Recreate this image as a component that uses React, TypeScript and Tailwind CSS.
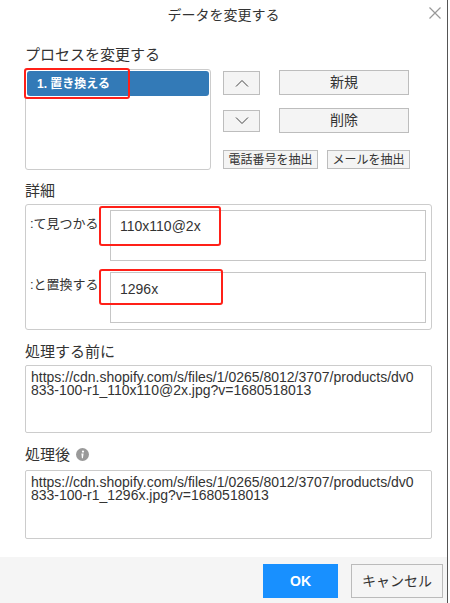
const font = "font-['Liberation_Sans','Noto_Sans_CJK_JP',sans-serif]";

const GrayButton = ({ label, className }: { label: string; className: string }) => {
  return (
    <button
      className={`flex items-center justify-center border border-[#bdbdbd] bg-[#f4f4f4] text-[#333] ${className}`}
    >
      {label}
    </button>
  );
};

const Chevron = ({ up }: { up?: boolean }) => {
  return (
    <svg width="14" height="8" viewBox="0 0 14 8" className="text-[#444]">
      <path
        d={up ? "M1 7.5 L7 1.5 L13 7.5" : "M1 0.5 L7 6.5 L13 0.5"}
        fill="none"
        stroke="currentColor"
        strokeWidth="1"
      />
    </svg>
  );
};

const RedMark = ({ className }: { className: string }) => {
  return <div className={`absolute rounded-[3px] border-2 border-[#ff2018] ${className}`} />;
};

const App = () => {
  return (
    <div className={`flex h-[603px] w-[450px] bg-white ${font}`}>
      <div className="flex w-[448px] flex-col border-r border-[#555]">
        {/* title bar */}
        <div className="relative flex h-[28px] items-center justify-center pt-[2px] text-[14px] text-[#333]">
          データを変更する
          <svg
            width="12"
            height="12"
            viewBox="0 0 12 12"
            className="absolute right-[6px] top-[7px] text-[#999]"
          >
            <path d="M0.5 0.5 L11.5 11.5 M11.5 0.5 L0.5 11.5" stroke="currentColor" strokeWidth="1.2" />
          </svg>
        </div>

        <div className="flex flex-1 flex-col pl-[25px] pr-[15px]">
          <div className="mt-[17px] h-[24px] text-[15px] leading-[20px] text-[#333]">
            プロセスを変更する
          </div>

          <div className="flex">
            <div className="relative h-[101px] w-[186px] rounded-[3px] border border-[#ccc] p-px">
              <div className="flex h-[25px] items-center rounded-[3px] bg-[#337ab7] pl-[10px] text-[12px] font-bold text-white">
                1. 置き換える
              </div>
              <RedMark className="-left-[2px] -top-[2px] h-[31px] w-[106px]" />
            </div>

            <div className="ml-[12px] flex flex-col">
              <div className="mt-px flex items-center">
                <button className="flex h-[24px] w-[37px] items-center justify-center border border-[#bdbdbd] bg-[#f4f4f4]">
                  <Chevron up />
                </button>
                <GrayButton label="新規" className="ml-[19px] h-[25px] w-[130px] text-[14px]" />
              </div>
              <div className="mt-[13px] flex items-center">
                <button className="flex h-[22px] w-[37px] items-center justify-center border border-[#bdbdbd] bg-[#f4f4f4]">
                  <Chevron />
                </button>
                <GrayButton label="削除" className="ml-[19px] h-[25px] w-[130px] text-[14px]" />
              </div>
              <div className="mt-[17px] flex">
                <GrayButton label="電話番号を抽出" className="h-[19px] w-[95px] text-[12px]" />
                <GrayButton label="メールを抽出" className="ml-[9px] h-[19px] w-[83px] text-[12px]" />
              </div>
            </div>
          </div>

          <div className="mt-[11px] h-[23px] text-[15px] leading-[20px] text-[#333]">詳細</div>

          <div className="relative flex h-[126px] flex-col gap-[11px] rounded-[3px] border border-[#ccc] pb-[6px] pl-[4px] pr-[5px] pt-[5px]">
            <div className="flex">
              <div className="w-[80px] pt-[4px] text-[13px] text-[#333]">:て見つかる</div>
              <div className="h-[51px] flex-1 border border-[#c6c6c6] px-[9px] pt-[5px] text-[14px] text-[#333]">
                110x110@2x
              </div>
            </div>
            <div className="flex">
              <div className="w-[80px] pt-[3px] text-[13px] text-[#333]">:と置換する</div>
              <div className="h-[51px] flex-1 border border-[#c6c6c6] px-[9px] pt-[6px] text-[14px] text-[#333]">
                1296x
              </div>
            </div>
            <RedMark className="left-[73px] top-[1px] h-[40px] w-[122px]" />
            <RedMark className="left-[73px] top-[64px] h-[36px] w-[124px]" />
          </div>

          <div className="mt-[12px] h-[23px] text-[15px] leading-[20px] text-[#333]">処理する前に</div>
          <div className="h-[68px] break-all rounded-[2px] border border-[#ccc] pl-[5px] pr-[12px] pt-[5px] text-[14px] leading-[13px] text-[#333]">
            https://cdn.shopify.com/s/files/1/0265/8012/3707/products/dv0833-100-r1_110x110@2x.jpg?v=1680518013
          </div>

          <div className="mt-[12px] flex h-[25px] items-start gap-[6px] text-[15px] leading-[20px] text-[#333]">
            処理後
            <svg width="13" height="13" viewBox="0 0 13 13" className="mt-[3px]">
              <circle cx="6.5" cy="6.5" r="6.5" fill="#9a9a9a" />
              <circle cx="7" cy="3.6" r="1.1" fill="#fff" />
              <path d="M5.4 5.6 H7.6 L6.9 10.2 H5.9 Z" fill="#fff" />
            </svg>
          </div>
          <div className="h-[69px] break-all rounded-[2px] border border-[#ccc] pl-[5px] pr-[12px] pt-[5px] text-[14px] leading-[13px] text-[#333]">
            https://cdn.shopify.com/s/files/1/0265/8012/3707/products/dv0833-100-r1_1296x.jpg?v=1680518013
          </div>
        </div>

        {/* footer */}
        <div className="flex h-[46px] items-start justify-end gap-[13px] bg-[#f5f5f5] pr-[4px] pt-[7px]">
          <button className="h-[34px] w-[75px] bg-[#1890ff] text-[14px] font-bold text-white">OK</button>
          <button className="h-[34px] w-[92px] border border-[#bbb] bg-[#f5f5f5] text-[14px] text-[#333]">
            キャンセル
          </button>
        </div>
      </div>
    </div>
  );
};

export default App;
